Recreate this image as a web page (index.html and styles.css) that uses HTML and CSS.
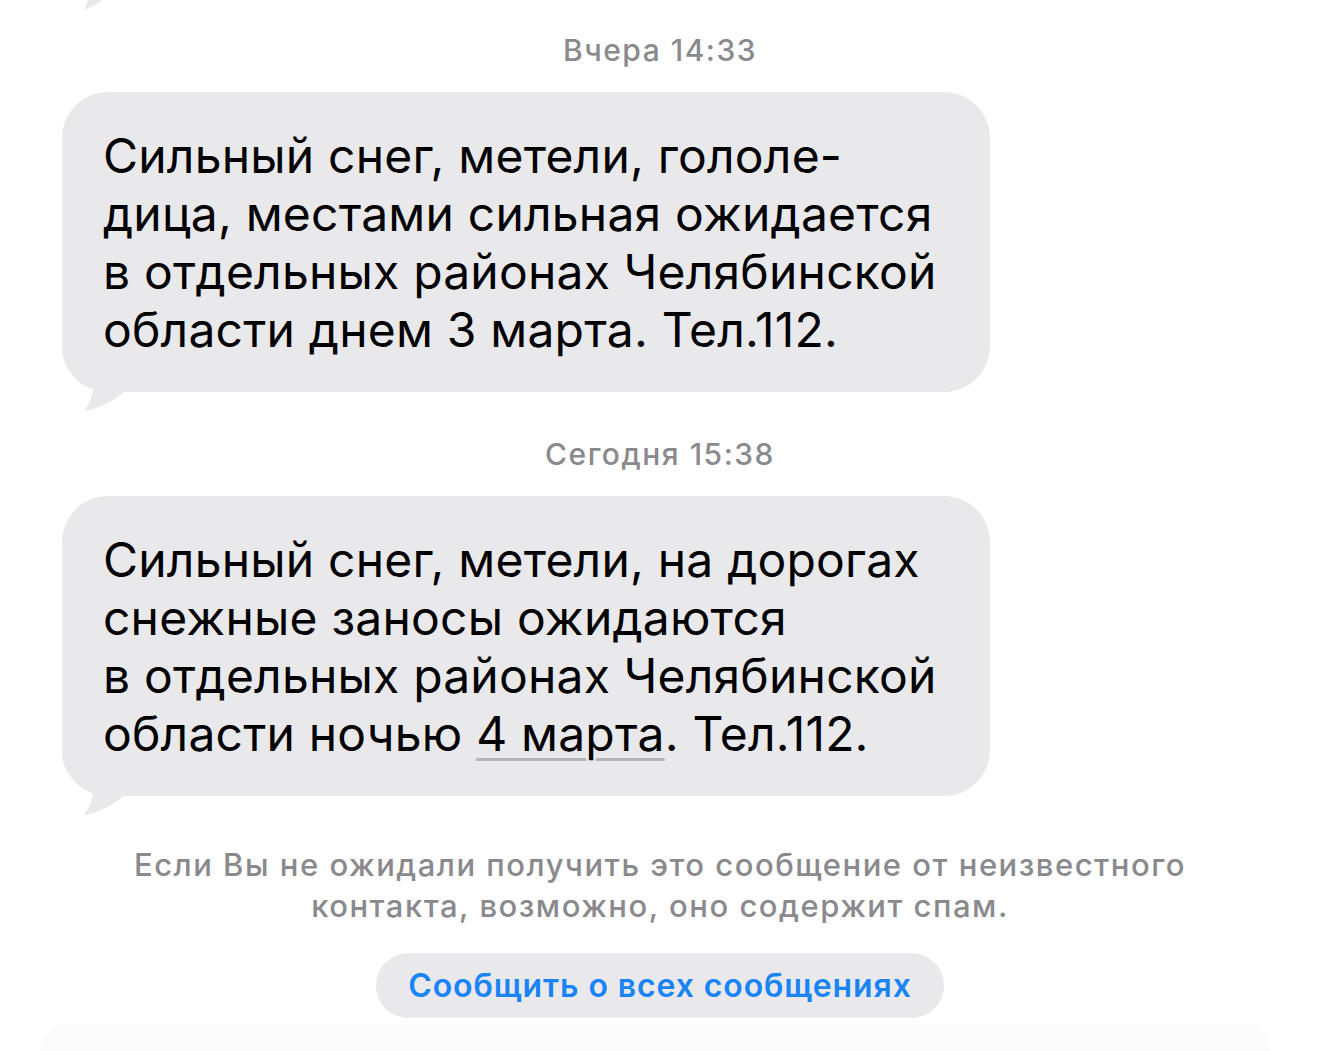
FILE: index.html
```html
<!DOCTYPE html>
<html lang="ru">
<head>
<meta charset="utf-8">
<title>Сообщения</title>
<link rel="stylesheet" href="styles.css">
</head>
<body>
<div class="chat">
  <svg class="prev-tail" width="30" height="12" viewBox="80 0 30 12"><path d="M88 0 L102 0 C97 4 92 7 84 10 C86 6 87 3 88 0 Z" fill="#e9e9eb"/></svg>

  <div class="stamp"><span class="day">Вчера</span> 14:33</div>

  <div class="bubble">
    <p class="msg">Сильный снег, метели, гололе-<br>дица, местами сильная ожидается<br>в отдельных районах Челябинской<br>области днем 3 марта. Тел.112.</p>
    <svg class="tail" width="90" height="82" viewBox="0 0 90 82"><path d="M0 0 L0 15 C0 35 12 48 32 54 C30 64 27 73 22 79 C38 77 52 68 62 60 L90 60 L90 0 Z" fill="#e9e9eb"/></svg>
  </div>

  <div class="stamp"><span class="day">Сегодня</span> 15:38</div>

  <div class="bubble">
    <p class="msg">Сильный снег, метели, на дорогах<br>снежные заносы ожидаются<br>в отдельных районах Челябинской<br>области ночью <span class="detected">4 марта</span>. Тел.112.</p>
    <svg class="tail" width="90" height="82" viewBox="0 0 90 82"><path d="M0 0 L0 15 C0 35 12 48 32 54 C30 64 27 73 22 79 C38 77 52 68 62 60 L90 60 L90 0 Z" fill="#e9e9eb"/></svg>
  </div>

  <p class="note">Если Вы не ожидали получить это сообщение от неизвестного<br>контакта, возможно, оно содержит спам.</p>

  <div class="actions">
    <button class="report">Сообщить о всех сообщениях</button>
  </div>

  <div class="composer-fade"></div>
</div>
</body>
</html>
```

FILE: styles.css
```css
html, body {
  margin: 0;
  padding: 0;
  background: #ffffff;
}

body {
  font-family: Inter, "Noto Sans", sans-serif;
  color: #000;
  overflow: hidden;
}

.chat {
  position: relative;
  width: 1320px;
  height: 1051px;
  display: flex;
  flex-direction: column;
  padding-top: 34px;
  box-sizing: border-box;
}

.prev-tail {
  position: absolute;
  left: 80px;
  top: 0;
}

.stamp {
  text-align: center;
  font-size: 30px;
  line-height: 32px;
  font-weight: 500;
  color: #8a8a8e;
  letter-spacing: 1.5px;
}

.stamp .day {
  font-weight: 500;
}

.bubble {
  position: relative;
  margin-left: 62px;
  width: 928px;
  box-sizing: border-box;
  background: #e9e9eb;
  border-radius: 46px;
  padding: 35px 20px 33px 41px;
  margin-top: 26px;
  margin-bottom: 46px;
}

.msg {
  position: relative;
  z-index: 1;
  margin: 0;
  font-size: 48px;
  line-height: 58px;
  font-weight: 400;
  letter-spacing: 0.2px;
  white-space: nowrap;
}

.tail {
  position: absolute;
  left: 0;
  bottom: -22px;
  display: block;
}

.detected {
  text-decoration: underline;
  text-decoration-color: #b5b5b9;
  text-decoration-thickness: 3px;
  text-underline-offset: 7px;
  text-decoration-skip-ink: auto;
}

.note {
  margin: 2px 0 0;
  text-align: center;
  font-size: 31px;
  line-height: 41px;
  font-weight: 500;
  color: #8a8a8e;
  letter-spacing: 1.5px;
}

.actions {
  display: flex;
  justify-content: center;
  margin-top: 27px;
}

.report {
  width: 568px;
  height: 65px;
  border: none;
  border-radius: 33px;
  background: #e9e9eb;
  color: #1a84f4;
  font-family: Inter, "Noto Sans", sans-serif;
  font-size: 32px;
  font-weight: 600;
  letter-spacing: 0.9px;
  padding: 0;
}

.composer-fade {
  margin: 6px 50px 0 40px;
  flex: 1;
  background: #fbfbfb;
  border-radius: 80px 80px 0 0;
}
```
